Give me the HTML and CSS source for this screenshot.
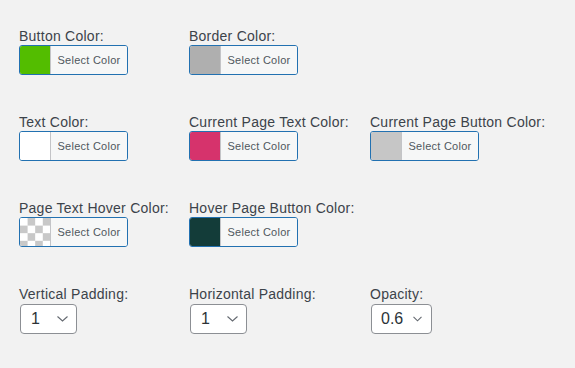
FILE: index.html
```html
<!DOCTYPE html>
<html>
<head>
<meta charset="utf-8">
<link rel="stylesheet" href="styles.css">
</head>
<body>
<div class="settings">
  <div class="field">
    <div class="label">Button Color:</div>
    <button class="color-btn"><span class="swatch" style="background:#53bd00"></span><span class="btn-text">Select Color</span></button>
  </div>
  <div class="field">
    <div class="label">Border Color:</div>
    <button class="color-btn"><span class="swatch" style="background:#afafaf"></span><span class="btn-text">Select Color</span></button>
  </div>
  <div class="field"></div>

  <div class="field">
    <div class="label">Text Color:</div>
    <button class="color-btn"><span class="swatch" style="background:#ffffff"></span><span class="btn-text">Select Color</span></button>
  </div>
  <div class="field">
    <div class="label">Current Page Text Color:</div>
    <button class="color-btn"><span class="swatch" style="background:#d6336c"></span><span class="btn-text">Select Color</span></button>
  </div>
  <div class="field">
    <div class="label">Current Page Button Color:</div>
    <button class="color-btn"><span class="swatch" style="background:#c6c6c6"></span><span class="btn-text">Select Color</span></button>
  </div>

  <div class="field">
    <div class="label">Page Text Hover Color:</div>
    <button class="color-btn"><span class="swatch checker"></span><span class="btn-text">Select Color</span></button>
  </div>
  <div class="field">
    <div class="label">Hover Page Button Color:</div>
    <button class="color-btn"><span class="swatch" style="background:#133c39"></span><span class="btn-text">Select Color</span></button>
  </div>
  <div class="field"></div>

  <div class="field">
    <div class="label">Vertical Padding:</div>
    <div class="select narrow"><span class="value">1</span><svg class="chev" width="11" height="6" viewBox="0 0 11 6"><path d="M0.5 0.5 L5.5 5 L10.5 0.5" fill="none" stroke="#646970" stroke-width="1.1"/></svg></div>
  </div>
  <div class="field">
    <div class="label">Horizontal Padding:</div>
    <div class="select narrow"><span class="value">1</span><svg class="chev" width="11" height="6" viewBox="0 0 11 6"><path d="M0.5 0.5 L5.5 5 L10.5 0.5" fill="none" stroke="#646970" stroke-width="1.1"/></svg></div>
  </div>
  <div class="field">
    <div class="label">Opacity:</div>
    <div class="select wide"><span class="value">0.6</span><svg class="chev" width="9" height="6" viewBox="0 0 9 6"><path d="M0.5 0.8 L4.5 4.8 L8.5 0.8" fill="none" stroke="#646970" stroke-width="1.1"/></svg></div>
  </div>
</div>
</body>
</html>
```
FILE: styles.css
```css
html, body {
  margin: 0;
  padding: 0;
  background: #f2f2f2;
}
body {
  font-family: "Liberation Sans", Arial, sans-serif;
  color: #3c434a;
}
.settings {
  display: grid;
  grid-template-columns: 170px 181px auto;
  align-items: start;
  row-gap: 38px;
  padding: 27px 0 0 19px;
}
.field {
  min-height: 48px;
}
.label {
  font-size: 14px;
  line-height: 18px;
  letter-spacing: 0.25px;
  white-space: nowrap;
}
.color-btn {
  display: flex;
  align-items: stretch;
  height: 30px;
  width: 109px;
  padding: 0;
  margin: 0;
  border: 1px solid #2271b1;
  border-radius: 3px;
  background: #f6f7f7;
  overflow: hidden;
  cursor: pointer;
  font-family: inherit;
}
.swatch {
  display: block;
  width: 30px;
  flex: none;
}
.checker {
  background-color: #ffffff;
  background-image: conic-gradient(#c8c8c8 25%, #ffffff 0 50%, #c8c8c8 0 75%, #ffffff 0);
  background-size: 15.2px 15.2px;
}
.btn-text {
  flex: 1;
  display: flex;
  align-items: center;
  justify-content: center;
  border-left: 1px solid #c3c4c7;
  background: #f6f7f7;
  color: #50575e;
  font-size: 11px;
  letter-spacing: 0.25px;
  white-space: nowrap;
}
.select {
  display: flex;
  align-items: center;
  justify-content: space-between;
  box-sizing: border-box;
  height: 30px;
  margin: 1px 0 0 1px;
  border: 1px solid #8c8f94;
  border-radius: 4px;
  background: #ffffff;
  color: #2c3338;
  font-size: 16px;
  padding: 0 8px 0 10px;
}
.select.narrow {
  width: 57px;
}
.select.wide {
  width: 61px;
  padding: 0 9px 0 9px;
}
.value {
  line-height: 1;
}
.chev {
  display: block;
  flex: none;
}
```
